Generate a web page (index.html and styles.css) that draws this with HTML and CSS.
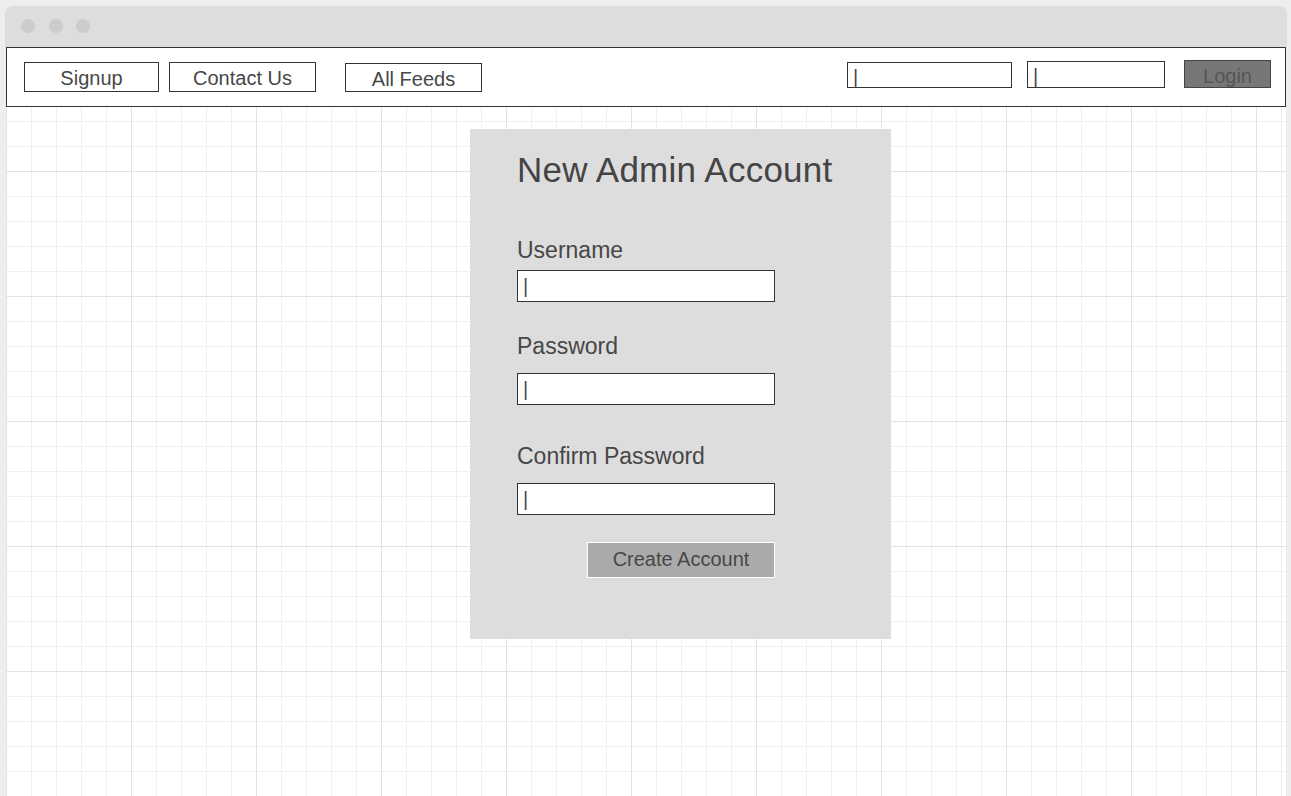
FILE: index.html
```html
<!DOCTYPE html>
<html lang="en">
<head>
<meta charset="utf-8">
<title>New Admin Account</title>
<link rel="stylesheet" href="styles.css">
</head>
<body>
<div class="window">
  <div class="titlebar">
    <span class="dot"></span>
    <span class="dot"></span>
    <span class="dot"></span>
  </div>
  <nav class="nav">
    <div class="nav-left">
      <a class="nav-btn btn-signup">Signup</a>
      <a class="nav-btn btn-contact">Contact Us</a>
      <a class="nav-btn btn-feeds">All Feeds</a>
    </div>
    <div class="nav-right">
      <div class="nav-input nav-input-user">|</div>
      <div class="nav-input nav-input-pass">|</div>
      <a class="login-btn">Login</a>
    </div>
  </nav>
  <main class="canvas">
    <section class="card">
      <h1 class="card-title">New Admin Account</h1>
      <div class="form">
        <label class="field-label label-username">Username</label>
        <div class="field-input input-first">|</div>
        <label class="field-label label-password">Password</label>
        <div class="field-input">|</div>
        <label class="field-label label-confirm">Confirm Password</label>
        <div class="field-input">|</div>
        <a class="create-btn">Create Account</a>
      </div>
    </section>
  </main>
</div>
</body>
</html>
```
FILE: styles.css
```css
* { box-sizing: border-box; }

html, body {
  margin: 0;
  padding: 0;
  height: 796px;
  overflow: hidden;
}

body {
  background: #eeeeee;
  font-family: "Liberation Sans", Arial, sans-serif;
  color: #474747;
}

.window {
  margin: 6px 0 0 6px;
  width: 1280px;
  height: 790px;
  display: flex;
  flex-direction: column;
}

.titlebar {
  height: 41px;
  margin: 0 -1px;
  background: #dddddd;
  border-radius: 8px 8px 0 0;
  display: flex;
  align-items: center;
  gap: 13.5px;
  padding: 0 0 1px 16px;
  flex: none;
}

.dot {
  width: 14px;
  height: 14px;
  border-radius: 50%;
  background: #cccccc;
}

.nav {
  height: 60px;
  flex: none;
  background: #ffffff;
  border: 1px solid #333333;
  display: flex;
  justify-content: space-between;
  align-items: flex-start;
  padding: 0 14px 0 17px;
}

.nav-left, .nav-right {
  display: flex;
  align-items: flex-start;
}

.nav-btn {
  display: block;
  border: 1px solid #333333;
  background: #ffffff;
  font-size: 20px;
  text-align: center;
  color: #474747;
}

.btn-signup {
  width: 135px;
  height: 30px;
  margin-top: 14px;
  padding-top: 2px;
  line-height: 26px;
}

.btn-contact {
  width: 147px;
  height: 30px;
  margin: 14px 0 0 10px;
  padding-top: 2px;
  line-height: 26px;
}

.btn-feeds {
  width: 137px;
  height: 29px;
  margin: 15px 0 0 29px;
  padding-top: 3px;
  line-height: 24px;
}

.nav-input {
  border: 1px solid #333333;
  background: #ffffff;
  font-size: 20px;
  line-height: 20px;
  padding: 4px 0 0 5px;
  color: #474747;
}

.nav-input-user {
  width: 165px;
  height: 26px;
  margin-top: 14px;
}

.nav-input-pass {
  width: 138px;
  height: 27px;
  margin: 13px 0 0 15px;
}

.login-btn {
  display: block;
  width: 87px;
  height: 28px;
  margin: 12px 0 0 19px;
  background: #777777;
  border: 1px solid #444444;
  color: #555555;
  font-size: 20px;
  line-height: 22px;
  padding-top: 4px;
  text-align: center;
}

.canvas {
  flex: 1;
  background-color: #ffffff;
  background-image:
    linear-gradient(to right, #e2e2e2 1px, transparent 1px),
    linear-gradient(to bottom, #e2e2e2 1px, transparent 1px),
    linear-gradient(to right, #efefef 1px, transparent 1px),
    linear-gradient(to bottom, #efefef 1px, transparent 1px);
  background-size: 125px 125px, 125px 125px, 25px 25px, 25px 25px;
  background-position: 0 64px, 0 64px, 0 64px, 0 64px;
  padding: 22px 0 0 464px;
}

.card {
  width: 421px;
  height: 510px;
  background: #dddddd;
  padding: 21px 0 0 47px;
}

.card-title {
  margin: 0;
  font-size: 35px;
  line-height: 40px;
  font-weight: normal;
  letter-spacing: 0.25px;
  color: #444444;
  white-space: nowrap;
}

.form {
  width: 258px;
  display: flex;
  flex-direction: column;
}

.field-label {
  display: block;
  font-size: 23px;
  line-height: 28px;
  color: #474747;
}

.label-username { margin-top: 46px; }
.label-password { margin-top: 30px; }
.label-confirm { margin-top: 37px; }

.field-input {
  width: 258px;
  height: 32px;
  margin-top: 13px;
  background: #ffffff;
  border: 1px solid #333333;
  font-size: 20px;
  line-height: 29px;
  padding: 1px 0 0 5px;
  color: #474747;
}

.field-input.input-first { margin-top: 6px; }

.create-btn {
  display: block;
  align-self: flex-end;
  width: 188px;
  height: 36px;
  margin-top: 27px;
  background: #aaaaaa;
  border: 1px solid #ffffff;
  font-size: 20px;
  line-height: 32px;
  padding-bottom: 2px;
  text-align: center;
  color: #474747;
}
```
